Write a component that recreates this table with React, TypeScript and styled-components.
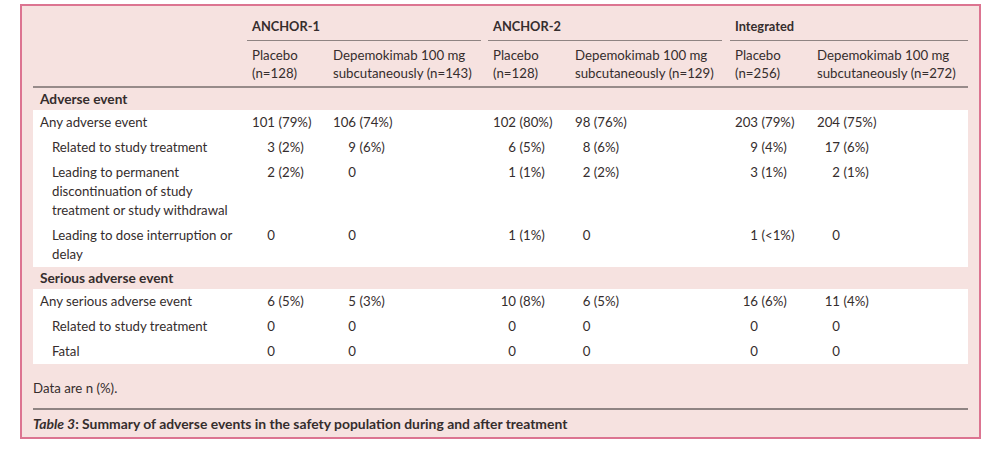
import React from "react";
import styled, { createGlobalStyle } from "styled-components";

const Global = createGlobalStyle`
  html, body { margin: 0; padding: 0; background: #ffffff; }
  body { font-family: Lato, "Open Sans", "Liberation Sans", sans-serif; color: #352d2d; }
`;

const COLS = "214px 81px 160px 82px 160px 82px 156px";

const Page = styled.div`
  padding: 4px 17px 0 20px;
`;

const Box = styled.div`
  box-sizing: border-box;
  width: 961px;
  height: 435px;
  border: 2px solid #dc7491;
  background: #f6e2e0;
  padding: 0 11px;
  font-size: 13.25px;
`;

const GroupRow = styled.div`
  display: grid;
  grid-template-columns: ${COLS};
  padding-top: 11px;
`;

const GroupCell = styled.div<{ $start: number; $gapRight: number }>`
  grid-column: ${(p) => p.$start} / span 2;
  margin-right: ${(p) => p.$gapRight}px;
  padding: 0 0 4px 5px;
  border-bottom: 1px solid #8f8483;
  font-weight: 700;
  font-size: 12.8px;
  line-height: 19px;
`;

const SubHeadRow = styled.div`
  display: grid;
  grid-template-columns: ${COLS};
  border-bottom: 2px solid #978b8a;
  padding: 5px 0 4px;
`;

const SubHeadCell = styled.div`
  padding-left: 5px;
  line-height: 18px;
  white-space: nowrap;
`;

const SectionTitle = styled.div`
  padding: 1px 0 2px 7px;
  line-height: 19px;
  font-weight: 700;
  font-size: 13.7px;
`;

const Body = styled.div`
  background: #ffffff;
`;

const Row = styled.div`
  display: grid;
  grid-template-columns: ${COLS};
  padding: 3px 0;
  line-height: 19px;
`;

const Label = styled.div<{ $indent: boolean }>`
  padding-left: ${(p) => (p.$indent ? 19 : 7)}px;
  white-space: nowrap;
`;

const Value = styled.div<{ $pad: number }>`
  padding-left: calc(5px + ${(p) => p.$pad}ch);
  white-space: nowrap;
`;

const Note = styled.div`
  margin-top: 15px;
  line-height: 19px;
  padding-bottom: 10px;
  border-bottom: 2px solid #8f8483;
`;

const Caption = styled.div`
  padding-top: 4px;
  line-height: 19px;
  font-weight: 700;
  font-size: 13.9px;
`;

type RowData = { label: string[]; indent: boolean; values: string[] };
type Section = { title: string; rows: RowData[] };

const MAX_DIGITS = [3, 3, 3, 2, 3, 3];

const sections: Section[] = [
  {
    title: "Adverse event",
    rows: [
      {
        label: ["Any adverse event"],
        indent: false,
        values: ["101 (79%)", "106 (74%)", "102 (80%)", "98 (76%)", "203 (79%)", "204 (75%)"],
      },
      {
        label: ["Related to study treatment"],
        indent: true,
        values: ["3 (2%)", "9 (6%)", "6 (5%)", "8 (6%)", "9 (4%)", "17 (6%)"],
      },
      {
        label: ["Leading to permanent", "discontinuation of study", "treatment or study withdrawal"],
        indent: true,
        values: ["2 (2%)", "0", "1 (1%)", "2 (2%)", "3 (1%)", "2 (1%)"],
      },
      {
        label: ["Leading to dose interruption or", "delay"],
        indent: true,
        values: ["0", "0", "1 (1%)", "0", "1 (<1%)", "0"],
      },
    ],
  },
  {
    title: "Serious adverse event",
    rows: [
      {
        label: ["Any serious adverse event"],
        indent: false,
        values: ["6 (5%)", "5 (3%)", "10 (8%)", "6 (5%)", "16 (6%)", "11 (4%)"],
      },
      {
        label: ["Related to study treatment"],
        indent: true,
        values: ["0", "0", "0", "0", "0", "0"],
      },
      {
        label: ["Fatal"],
        indent: true,
        values: ["0", "0", "0", "0", "0", "0"],
      },
    ],
  },
];

const groups = [
  { name: "ANCHOR-1", start: 2, gap: 7 },
  { name: "ANCHOR-2", start: 4, gap: 8 },
  { name: "Integrated", start: 6, gap: 0 },
];

const subHeads = [
  ["Placebo", "(n=128)"],
  ["Depemokimab 100 mg", "subcutaneously (n=143)"],
  ["Placebo", "(n=128)"],
  ["Depemokimab 100 mg", "subcutaneously (n=129)"],
  ["Placebo", "(n=256)"],
  ["Depemokimab 100 mg", "subcutaneously (n=272)"],
];

function digitsOf(v: string): number {
  const m = v.match(/^\d+/);
  return m ? m[0].length : 0;
}

function Lines({ lines }: { lines: string[] }) {
  return (
    <>
      {lines.map((l, i) => (
        <React.Fragment key={i}>
          {i > 0 && <br />}
          {l}
        </React.Fragment>
      ))}
    </>
  );
}

export default function App() {
  return (
    <Page>
      <Global />
      <Box>
        <GroupRow>
          {groups.map((g) => (
            <GroupCell key={g.name} $start={g.start} $gapRight={g.gap}>
              {g.name}
            </GroupCell>
          ))}
        </GroupRow>
        <SubHeadRow>
          <div />
          {subHeads.map((s, i) => (
            <SubHeadCell key={i}>
              <Lines lines={s} />
            </SubHeadCell>
          ))}
        </SubHeadRow>
        {sections.map((sec) => (
          <React.Fragment key={sec.title}>
            <SectionTitle>{sec.title}</SectionTitle>
            <Body>
              {sec.rows.map((r, ri) => (
                <Row key={ri}>
                  <Label $indent={r.indent}>
                    <Lines lines={r.label} />
                  </Label>
                  {r.values.map((v, vi) => (
                    <Value key={vi} $pad={MAX_DIGITS[vi] - digitsOf(v)}>
                      {v}
                    </Value>
                  ))}
                </Row>
              ))}
            </Body>
          </React.Fragment>
        ))}
        <Note>Data are n (%).</Note>
        <Caption>
          <i>Table 3</i>: Summary of adverse events in the safety population during and after treatment
        </Caption>
      </Box>
    </Page>
  );
}
